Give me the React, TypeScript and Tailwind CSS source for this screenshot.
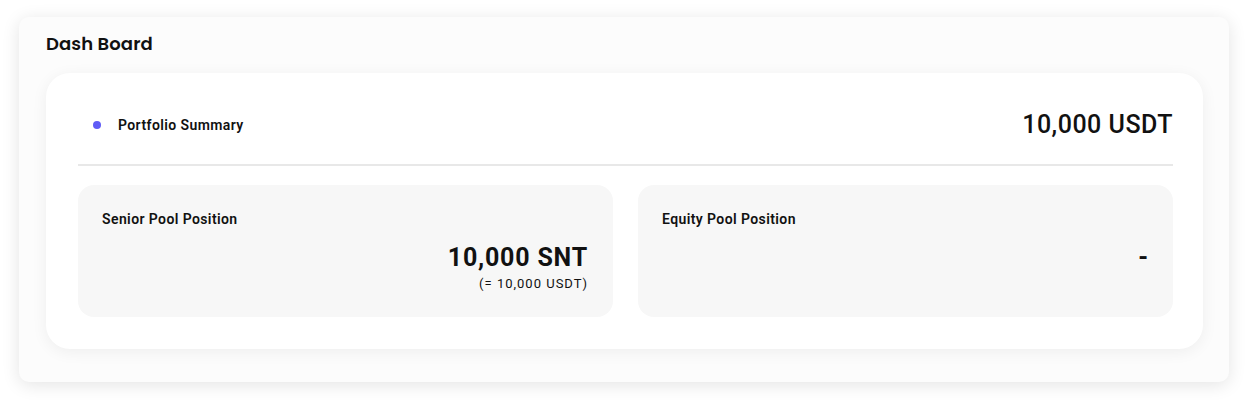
import React from "react";

export default function App() {
  return (
    <div className="w-[1250px] h-[400px] bg-white overflow-hidden" style={{ fontFamily: "Roboto, 'Liberation Sans', sans-serif" }}>
      <div className="ml-[19px] mt-[17px] w-[1210px] h-[365px] rounded-[10px] bg-[#fcfcfc] shadow-[0_3px_18px_rgba(0,0,0,0.11)] pl-[27px] pr-[26px] pt-[16px]">
        <h1 className="text-[18px] leading-[22px] font-semibold text-[#111] tracking-[0.1px]" style={{ fontFamily: "Poppins, sans-serif" }}>
          Dash Board
        </h1>
        <div className="mt-[18px] rounded-[24px] bg-white shadow-[0_3px_16px_rgba(0,0,0,0.06)] pl-[32px] pr-[30px] pt-[32px] pb-[32px]">
          <div className="h-[40px] flex items-center justify-between pl-[15px]">
            <div className="flex items-center">
              <span className="w-[8px] h-[8px] rounded-full bg-[#5f5cf6]" />
              <span className="ml-[17px] text-[14px] tracking-[0.4px] font-semibold text-[#111]">Portfolio Summary</span>
            </div>
            <span className="text-[25px] tracking-[0.5px] font-medium text-[#111]">10,000 USDT</span>
          </div>
          <div className="mt-[19px] h-[2px] bg-[#e8e8e8]" />
          <div className="mt-[19px] grid grid-cols-2 gap-[25px]">
            <div className="h-[132px] rounded-[16px] bg-[#f7f7f7] pl-[24px] pr-[25px] pt-[25px]">
              <div className="text-[14px] leading-[18px] tracking-[0.4px] font-semibold text-[#111]">Senior Pool Position</div>
              <div className="mt-[15px] text-right text-[25px] leading-[30px] tracking-[0.8px] font-bold text-[#111]">10,000 SNT</div>
              <div className="mt-[3px] text-right text-[13px] leading-[16px] tracking-[1px] text-[#111]">(= 10,000 USDT)</div>
            </div>
            <div className="h-[132px] rounded-[16px] bg-[#f7f7f7] pl-[24px] pr-[25px] pt-[25px]">
              <div className="text-[14px] leading-[18px] tracking-[0.4px] font-semibold text-[#111]">Equity Pool Position</div>
              <div className="mt-[15px] text-right text-[25px] leading-[30px] font-bold text-[#111]">-</div>
            </div>
          </div>
        </div>
      </div>
    </div>
  );
}
